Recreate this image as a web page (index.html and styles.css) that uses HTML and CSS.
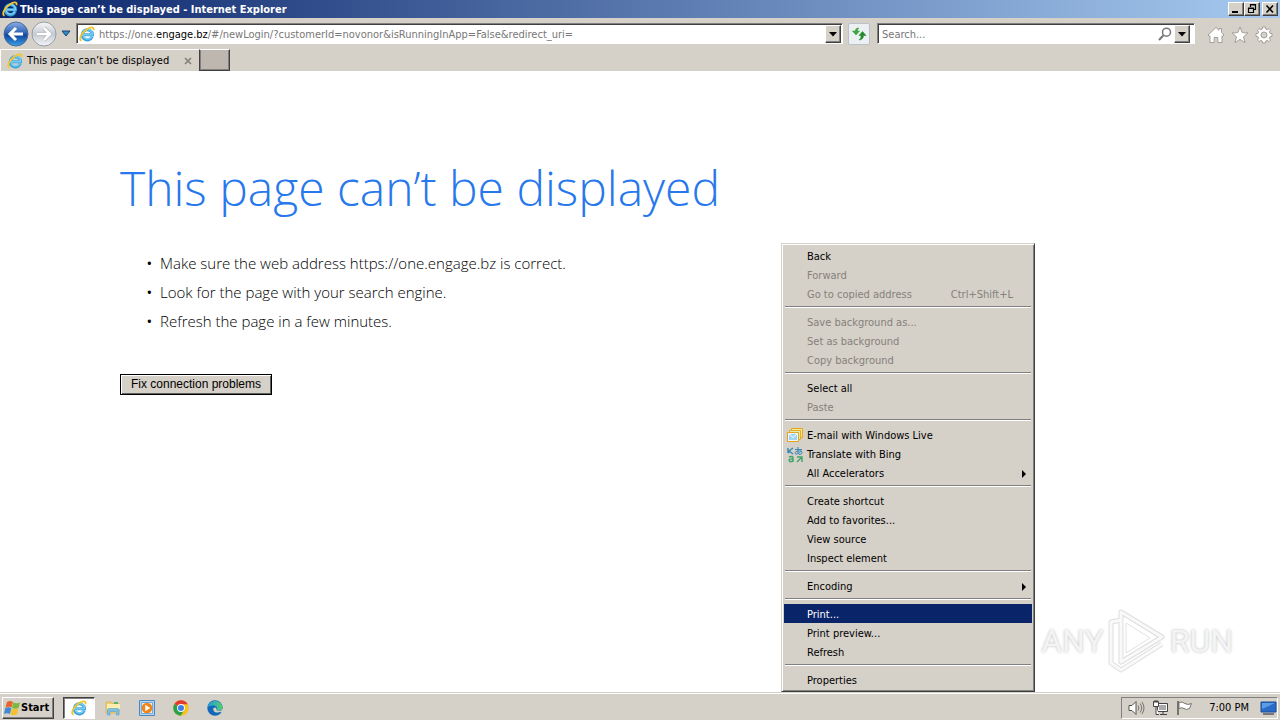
FILE: index.html
```html
<!DOCTYPE html>
<html lang="en">
<head>
  <meta charset="UTF-8">
  <meta name="viewport" content="width=device-width, initial-scale=1.0">
  <title>This page can’t be displayed</title>
  <link rel="stylesheet" href="styles.css">
</head>
<body>
  <!-- Shared icons -->
  <svg class="sprite" aria-hidden="true">
    <symbol id="ie" viewBox="0 0 16 16">
      <path d="M13.2 10.6A5.1 5.1 0 1 1 13.5 8.7H5" fill="none" stroke="#3c9fd8" stroke-width="3"/>
      <path d="M12.9 10.4A4.8 4.8 0 1 1 13.4 8.6H5" fill="none" stroke="#74cdf4" stroke-width="1.6"/>
      <path d="M2.6 14.6C-.8 13.8 2.2 7 7.6 3.4C11.4 .8 15.4 .2 14.5 4.2" fill="none" stroke="#f0c62c" stroke-width="1.8"/>
    </symbol>
    <symbol id="down" viewBox="0 0 8 5"><path d="M0 0H8L4 4.5Z"/></symbol>
  </svg>

  <header class="titlebar">
    <svg class="icon"><use href="#ie"/></svg>
    <span class="title">This page can’t be displayed - Internet Explorer</span>
    <button class="win-btn" aria-label="Minimize"><svg viewBox="0 0 12 10"><path d="M2 8H8" stroke="#000" stroke-width="2"/></svg></button>
    <button class="win-btn" aria-label="Restore"><svg viewBox="0 0 12 10"><path d="M4.5 3V.5H9.5V5.5H8M4 1H10M2.5 4.5H7.5V8.5H2.5ZM2 4H8" fill="none" stroke="#000" stroke-width="1.2"/></svg></button>
    <button class="win-btn close" aria-label="Close"><svg viewBox="0 0 12 10"><path d="M2.5 1.5L9 8.5M9 1.5L2.5 8.5" stroke="#000" stroke-width="1.6"/></svg></button>
  </header>

  <nav class="navbar">
    <button class="round" aria-label="Back">
      <svg viewBox="0 0 26 26">
        <defs><linearGradient id="blue" x2="0" y2="1"><stop stop-color="#8aaee2"/><stop offset=".45" stop-color="#2d64b7"/><stop offset=".55" stop-color="#12459d"/><stop offset="1" stop-color="#38a2e8"/></linearGradient></defs>
        <circle cx="13" cy="13" r="12" fill="url(#blue)" stroke="#506b98"/>
        <path d="M20 13H8M13 7L7 13L13 19" fill="none" stroke="#fff" stroke-width="3"/>
      </svg>
    </button>
    <button class="round" aria-label="Forward">
      <svg viewBox="0 0 26 26">
        <defs><linearGradient id="grey" x2="0" y2="1"><stop stop-color="#f8f8f8"/><stop offset=".5" stop-color="#c6cbd1"/><stop offset="1" stop-color="#f2f5f8"/></linearGradient></defs>
        <circle cx="13" cy="13" r="12" fill="url(#grey)" stroke="#979da5"/>
        <path d="M6 13H18M13 7L19 13L13 19" fill="none" stroke="#aeb3bb" stroke-width="4"/>
        <path d="M6 13H18M13 7L19 13L13 19" fill="none" stroke="#fff" stroke-width="2.6"/>
      </svg>
    </button>
    <button class="recent" aria-label="Recent pages"><svg viewBox="0 0 10 7"><path d="M1 1H9L5 6Z" fill="#2b8cc8" stroke="#1c4576"/></svg></button>
    <div class="field address">
      <svg class="icon"><use href="#ie"/></svg>
      <div class="url" role="textbox" aria-label="Address" contenteditable="true" spellcheck="false">https://one.<b>engage.bz</b>/#/newLogin/?customerId=novonor&amp;isRunningInApp=False&amp;redirect_uri=</div>
      <button class="drop" aria-label="Show address list"><svg><use href="#down"/></svg></button>
    </div>
    <button class="refresh" aria-label="Refresh">
      <svg viewBox="0 0 16 16"><path d="M8 2Q4 2 4.500 5H1.500L5 9L8.500 5H6.500Q6 3.500 8 2Z" fill="#3aa53f" stroke="#3aa53f" stroke-width=".6"/><path d="M8 14Q12.500 13.500 12.500 9.500H15L11.500 5.500L8 9.500H10.200Q10.500 12.500 8 14Z" fill="#238a2b" stroke="#238a2b" stroke-width=".6"/></svg>
    </button>
    <div class="field search">
      <input type="text" placeholder="Search..." aria-label="Search">
      <button class="glass" aria-label="Go"><svg viewBox="0 0 14 14"><circle cx="8.5" cy="5.2" r="4" fill="none" stroke="#777" stroke-width="1.5"/><path d="M5.5 8.2L1 13" stroke="#777" stroke-width="2"/></svg></button>
      <button class="drop" aria-label="Search providers"><svg><use href="#down"/></svg></button>
    </div>
    <div class="tools">
      <button aria-label="Home"><svg viewBox="0 0 18 18"><path d="M1 9L9 1.5L12 4.3V2.5H14.5V6.6L17 9L15.7 10.3L15 9.7V16.5H10.8V11.5H7.2V16.5H3V9.7L2.3 10.3Z"/></svg></button>
      <button aria-label="Favorites"><svg viewBox="0 0 18 18"><path d="M9 1L11.2 6.6L17 7L12.5 10.8L14 16.7L9 13.4L4 16.7L5.5 10.8L1 7L6.8 6.6Z"/></svg></button>
      <button aria-label="Tools"><svg viewBox="0 0 18 18"><path d="M7.6 1H10.4L10.8 3.1L12.2 3.7L14 2.5L15.6 4.1L14.4 5.9L15 7.3L17 7.6V10.4L15 10.8L14.4 12.2L15.6 14L14 15.6L12.2 14.4L10.8 15L10.4 17H7.6L7.2 15L5.8 14.4L4 15.6L2.4 14L3.6 12.2L3 10.8L1 10.4V7.6L3 7.3L3.6 5.9L2.4 4.1L4 2.5L5.8 3.7L7.2 3.1Z"/><circle cx="9" cy="9" r="3" class="hole"/></svg></button>
    </div>
  </nav>

  <div class="tabs">
    <div class="tab">
      <svg class="icon"><use href="#ie"/></svg>
      <span>This page can’t be displayed</span>
      <button aria-label="Close tab"><svg viewBox="0 0 8 8"><path d="M1 1L7 7M7 1L1 7" stroke="#858079" stroke-width="1.7"/></svg></button>
    </div>
    <button class="new-tab" aria-label="New tab"></button>
  </div>

  <main class="page">
    <h1>This page can’t be displayed</h1>
    <ul class="tips">
      <li>Make sure the web address https://one.engage.bz is correct.</li>
      <li>Look for the page with your search engine.</li>
      <li>Refresh the page in a few minutes.</li>
    </ul>
    <button class="fix">Fix connection problems</button>

    <div class="watermark">
      <span>ANY</span>
      <svg viewBox="0 0 58 64"><g fill="none" stroke-linejoin="round"><path d="M13 3L54 28L13 53ZM13 11L3 13V54L13 61L54 35" stroke="#dedede" stroke-width="5"/><path d="M13 3L54 28L13 53ZM13 11L3 13V54L13 61L54 35" stroke="#f9f9f9" stroke-width="3"/></g><path d="M18 14L42 29L18 44Z" fill="#fff" stroke="#e2e2e2"/></svg>
      <span>RUN</span>
    </div>

    <div class="menu" role="menu">
      <button role="menuitem">Back</button>
      <button role="menuitem" disabled>Forward</button>
      <button role="menuitem" disabled>Go to copied address<kbd>Ctrl+Shift+L</kbd></button>
      <hr>
      <button role="menuitem" disabled>Save background as...</button>
      <button role="menuitem" disabled>Set as background</button>
      <button role="menuitem" disabled>Copy background</button>
      <hr>
      <button role="menuitem">Select all</button>
      <button role="menuitem" disabled>Paste</button>
      <hr>
      <button role="menuitem" class="with-icon">
        <svg viewBox="0 0 16 16"><path d="M4.5 .5H15.5V9.500H4.5Z" fill="#fbe58a" stroke="#e4a520"/><path d="M2.5 2.5H13.5V11.5H2.5Z" fill="#d8efb0" stroke="#e7ad28"/><path d="M.5 4.5H11.5V13.5H.5Z" fill="#eaf7ff" stroke="#e3a31f"/><path d="M2 6H10V12H2Z" fill="#9fd4f4"/><path d="M2 6L6 9.500L10 6" fill="none" stroke="#fff"/></svg>E-mail with Windows Live</button>
      <button role="menuitem" class="with-icon">
        <svg viewBox="0 0 16 16"><path d="M1 1V6M6 1L2 4L6 7M1 6L3 4" fill="none" stroke="#3687b5" stroke-width="1.4"/><path d="M8 2.5H15M11 0V7M14 3.5C13 7 8 8 8 6C8 4 14 3 15 5C15.5 7 13 7.5 12 7.5" fill="none" stroke="#3687b5"/><path d="M2 10Q6 8.5 6 11V15M6 12Q2 11.5 2 13.5Q3 16 6 13.5M10 15L14 11M10 10H15V15" fill="none" stroke="#3fa368" stroke-width="1.4"/></svg>Translate with Bing</button>
      <button role="menuitem" class="sub">All Accelerators</button>
      <hr>
      <button role="menuitem">Create shortcut</button>
      <button role="menuitem">Add to favorites...</button>
      <button role="menuitem">View source</button>
      <button role="menuitem">Inspect element</button>
      <hr>
      <button role="menuitem" class="sub">Encoding</button>
      <hr>
      <button role="menuitem" class="active">Print...</button>
      <button role="menuitem">Print preview...</button>
      <button role="menuitem">Refresh</button>
      <hr>
      <button role="menuitem">Properties</button>
    </div>
  </main>

  <footer class="taskbar">
    <button class="start">
      <svg viewBox="0 0 17 16"><path d="M3 2Q6 0 9 2L7.5 7.5Q5 6 1.5 7.5Z" fill="#e8642c"/><path d="M9.500 2.5Q13 4 16 2.5L14.5 8Q11.5 9.5 8 8Z" fill="#7cb83c"/><path d="M1.3 8Q4.5 6.500 7.300 8L6 14Q3 12.5 0 14Z" fill="#3f8bd8"/><path d="M7.800 8.500Q11 10 14.3 8.500L13 14.5Q10 16 6.500 14.5Z" fill="#f5c22d"/></svg>Start</button>
    <button class="task current" aria-label="Internet Explorer"><svg viewBox="0 0 16 16"><use href="#ie"/></svg></button>
    <button class="task" aria-label="Explorer"><svg viewBox="0 0 16 16"><path d="M1 2H6L7 3.5H14V13H1Z" fill="#efcf6c" stroke="#d3ad45" stroke-width=".6"/><path d="M2 4H15V9H2Z" fill="#fbeeb0"/><path d="M9 2H13V4H9Z" fill="#62b35f"/><path d="M2.5 15V10Q2.5 8.5 4 8.5H12.5Q14 8.5 14 10V15H11.5V11.5H5V15Z" fill="#7cc0e4" stroke="#4e9bc6" stroke-width=".5"/></svg></button>
    <button class="task" aria-label="Media Player"><svg viewBox="0 0 16 16"><path d="M.5.5H15.5V15.5H.5Z" fill="#b5d6f0" stroke="#4a87c0"/><path d="M2.5 2.5H13.5V13.5H2.5Z" fill="#e2effa" stroke="#79abd6"/><circle cx="8" cy="8" r="5.3" fill="#f08418"/><path d="M6.3 4.8L11.3 8L6.3 11.2Z" fill="#fff"/></svg></button>
    <button class="task" aria-label="Chrome"><svg viewBox="0 0 16 16"><circle cx="8" cy="8" r="7.7" fill="#fbc116"/><path d="M8 8L1.3 4.1A7.7 7.7 0 0 1 14.7 4.2H8Z" fill="#e33b2e"/><path d="M8 8L1.3 4.1A7.7 7.7 0 0 0 7.6 15.7L11.3 10Z" fill="#2da04c"/><circle cx="8" cy="8" r="3.9" fill="#fff"/><circle cx="8" cy="8" r="3" fill="#3f7ee8"/></svg></button>
    <button class="task" aria-label="Edge"><svg viewBox="0 0 16 16"><defs><linearGradient id="edge"><stop stop-color="#239be0"/><stop offset="1" stop-color="#55cf6a"/></linearGradient></defs><circle cx="8" cy="8" r="7.7" fill="#1468b8"/><path d="M.4 7.5A7.7 7.7 0 0 1 15.7 8C15.5 11 11 11.3 9.7 10C11 8 9.5 5.3 6 5.4C3 5.4 1 6.5.4 7.5Z" fill="url(#edge)"/><path d="M6.5 8C5.5 11 8.5 14 14 11.8C14.5 11.5 14.7 12 14.3 12.5L16 11V9Q13 12 9.7 10.2Q10 8.5 8.5 7.5Z" fill="#d5d0c8"/></svg></button>
    <div class="tray">
      <svg viewBox="0 0 17 16"><path d="M1 5.5H4L8 1.5V14.5L4 10.5H1Z" fill="#fff" stroke="#55524e"/><path d="M10 5.5Q12 8 10 10.5M12 3.5Q15.5 8 12 12.5M14 2Q18 8 14 14" fill="none" stroke="#77736e"/></svg>
      <svg viewBox="0 0 17 16"><path d="M5.5 3.5H15.5V11.5H5.5Z" fill="#aaa" stroke="#444"/><path d="M6.5 4.5H14.5V10.5H6.5Z" fill="none" stroke="#fff"/><path d="M8 14.5H15M11 12V14" stroke="#444"/><path d="M1.5 1.5H6.5V6.5H1.5ZM4 6.5V14.5H7M3 0V3M5 0V3" fill="#fff" stroke="#444"/></svg>
      <svg viewBox="0 0 17 16"><path d="M2 1V15" stroke="#77736e" stroke-width="2"/><path d="M3 2.500Q6 1 9 3.500Q12 5.500 15.500 3.500L13.500 8.500Q10 10.500 8 8.500Q6 7 3 8.500Z" fill="#fff" stroke="#77736e"/></svg>
      <time>7:00 PM</time>
      <svg viewBox="0 0 17 16"><path d="M1 2H16V12H1Z" fill="#286cc5" stroke="#194b95"/><path d="M2 3H15L2 9Z" fill="#5a9ce5"/><path d="M3 14H14" stroke="#777" stroke-width="2"/></svg>
    </div>
  </footer>
</body>
</html>
```

FILE: styles.css
```css
* {
  box-sizing: border-box;
}
body {
  margin: 0;
  height: 100vh;
  display: flex;
  flex-direction: column;
  overflow: hidden;
  font-family: "DejaVu Sans Condensed", "Liberation Sans", sans-serif;
  font-size: 11px;
  color: #000;
  background-color: #d5d0c8;
}
button {
  font: inherit;
  color: inherit;
  padding: 0;
  border: none;
  background: none;
  flex-shrink: 0;
}
svg {
  display: block;
  flex-shrink: 0;
}
.sprite {
  position: absolute;
  width: 0;
  height: 0;
}
.icon {
  width: 16px;
  height: 16px;
}

/* Title bar */
.titlebar {
  display: flex;
  align-items: center;
  height: 18px;
  padding: 0 2px;
  background: linear-gradient(to right, #0a246a, #a6caf0);
  color: #fff;
  font-weight: bold;
}
.title {
  flex: 1;
  padding-left: 2px;
}
.win-btn,
.drop {
  display: flex;
  align-items: center;
  justify-content: center;
  background-color: #d5d0c8;
  border: 1px solid;
  border-color: #fff #404040 #404040 #fff;
  box-shadow: inset -1px -1px #808080;
}
.win-btn {
  width: 16px;
  height: 14px;
}
.win-btn svg {
  width: 12px;
  height: 10px;
}
.close {
  margin-left: 2px;
}

/* Navigation bar */
.navbar {
  display: flex;
  align-items: center;
  height: 31px;
  padding: 0 7px 0 3px;
}
.round {
  width: 28px;
}
.round svg {
  width: 26px;
  height: 26px;
}
.recent {
  width: 17px;
  padding-left: 2px;
}
.recent svg {
  width: 10px;
  height: 7px;
}
.field {
  display: flex;
  align-items: center;
  height: 21px;
  background-color: #fff;
  border: 1px solid;
  border-color: #808080 #fff #fff #808080;
  box-shadow: inset 1px 1px #404040;
}
.address {
  flex: 1;
  min-width: 0;
  padding: 1px 1px 0 2px;
}
.url {
  flex: 1;
  min-width: 0;
  padding-left: 4px;
  white-space: nowrap;
  overflow: hidden;
  color: #777;
}
.url b {
  font-weight: normal;
  color: #000;
}
.drop {
  width: 16px;
  height: 18px;
}
.drop svg {
  width: 8px;
  height: 5px;
}
.refresh {
  width: 22px;
  height: 22px;
  margin: 0 7px 0 5px;
  padding: 2px;
  border: 1px solid #b9c2ca;
  border-radius: 2px;
  background-color: #edf0f2;
}
.refresh svg {
  width: 16px;
  height: 16px;
}
.search {
  width: 318px;
  padding: 1px 4px 0 2px;
}
.search input {
  flex: 1;
  min-width: 0;
  padding: 0 2px;
  border: none;
  outline: none;
  background: none;
  font: inherit;
}
.search input::placeholder {
  color: #777;
}
.glass svg {
  width: 14px;
  height: 14px;
  margin-right: 2px;
}
.tools {
  display: flex;
  gap: 6px;
  padding: 2px 0 0 12px;
}
.tools svg {
  width: 18px;
  height: 18px;
  fill: #fff;
  stroke: #a39e97;
}
.tools .hole {
  fill: #d5d0c8;
}

/* Tabs */
.tabs {
  display: flex;
  height: 22px;
}
.tab {
  display: flex;
  align-items: center;
  width: 199px;
  padding: 0 7px 0 6px;
  border-top: 1px solid #fff;
  border-left: 1px solid #fff;
}
.tab span {
  flex: 1;
  padding-left: 4px;
}
.tab svg:not(.icon) {
  width: 8px;
  height: 8px;
}
.new-tab {
  width: 31px;
  height: 22px;
  border: 1px solid;
  border-color: #fff #404040 #404040 #404040;
  background-color: #bdb7b0;
  box-shadow: inset 1px 0 #808080, inset -1px -1px #808080;
}

/* Error page */
.page {
  position: relative;
  flex: 1;
  padding: 82px 120px 0;
  background-color: #fff;
}
h1 {
  margin: 0;
  font: 300 48px/70px "Open Sans", sans-serif;
  color: #2778ec;
}
.tips {
  margin: 26px 0 38px;
  padding-left: 40px;
  font: 300 15px/29px "Open Sans", sans-serif;
}
.tips li::marker {
  content: "•  ";
  font-size: 15px;
  font-weight: 400;
}
.fix {
  width: 152px;
  height: 21px;
  padding-bottom: 2px;
  border: 1px solid #000;
  background-color: #d5d0c8;
  box-shadow: inset 1px 1px #fff, inset -1px -1px #606060;
  font: 12px "Liberation Sans", sans-serif;
}

/* Context menu */
.menu {
  position: absolute;
  left: 781px;
  top: 172px;
  width: 254px;
  padding: 2px;
  background-color: #d5d0c8;
  border: 1px solid;
  border-color: #d5d0c8 #404040 #404040 #d5d0c8;
  box-shadow: inset 1px 1px #fff, inset -1px -1px #808080;
}
.menu button {
  display: flex;
  align-items: center;
  width: 100%;
  height: 19px;
  padding: 2px 19px 0 23px;
}
.menu button:disabled {
  color: #85817b;
}
.menu kbd {
  margin-left: auto;
  font: inherit;
}
.menu hr {
  height: 2px;
  margin: 3px 1px 4px;
  border: none;
  border-top: 1px solid #808080;
  border-bottom: 1px solid #fff;
}
.menu .with-icon {
  gap: 4px;
  padding-left: 3px;
}
.with-icon svg {
  width: 16px;
  height: 16px;
}
.menu .sub {
  justify-content: space-between;
  padding-right: 6px;
}
.sub::after {
  content: "";
  border: 4px solid transparent;
  border-left-color: #000;
  border-right: none;
}
.menu .active {
  background-color: #0a246a;
  color: #fff;
}

/* Watermark */
.watermark {
  position: absolute;
  right: 47px;
  bottom: 19px;
  display: flex;
  align-items: center;
  gap: 4px;
  font: 32px Roboto, sans-serif;
  color: #f4f4f4;
  text-shadow: 0 0 3px #bbb;
}
.watermark svg {
  width: 58px;
  height: 64px;
}

/* Taskbar */
.taskbar {
  display: flex;
  align-items: center;
  height: 28px;
  padding: 3px 2px 1px;
  border-top: 1px solid #d5d0c8;
  box-shadow: inset 0 1px #fff;
}
.start {
  display: flex;
  align-items: center;
  width: 52px;
  height: 22px;
  margin-right: 9px;
  padding-left: 1px;
  border: 1px solid;
  border-color: #fff #404040 #404040 #fff;
  box-shadow: inset -1px -1px #808080;
  font-weight: bold;
}
.start svg {
  width: 17px;
  height: 16px;
}
.task {
  display: flex;
  align-items: center;
  justify-content: center;
  width: 32px;
  height: 22px;
  margin-right: 2px;
}
.task svg {
  width: 16px;
  height: 16px;
}
.current {
  background-color: #fff;
  border: 1px solid;
  border-color: #404040 #fff #fff #404040;
  box-shadow: inset 1px 1px #808080;
}
.tray {
  display: flex;
  align-items: center;
  gap: 7px;
  height: 22px;
  margin-left: auto;
  padding: 0 0 0 6px;
  border: 1px solid;
  border-color: #808080 #fff #fff #808080;
}
.tray svg {
  width: 17px;
  height: 16px;
}
.tray time {
  padding: 0 4px 0 9px;
}
```
